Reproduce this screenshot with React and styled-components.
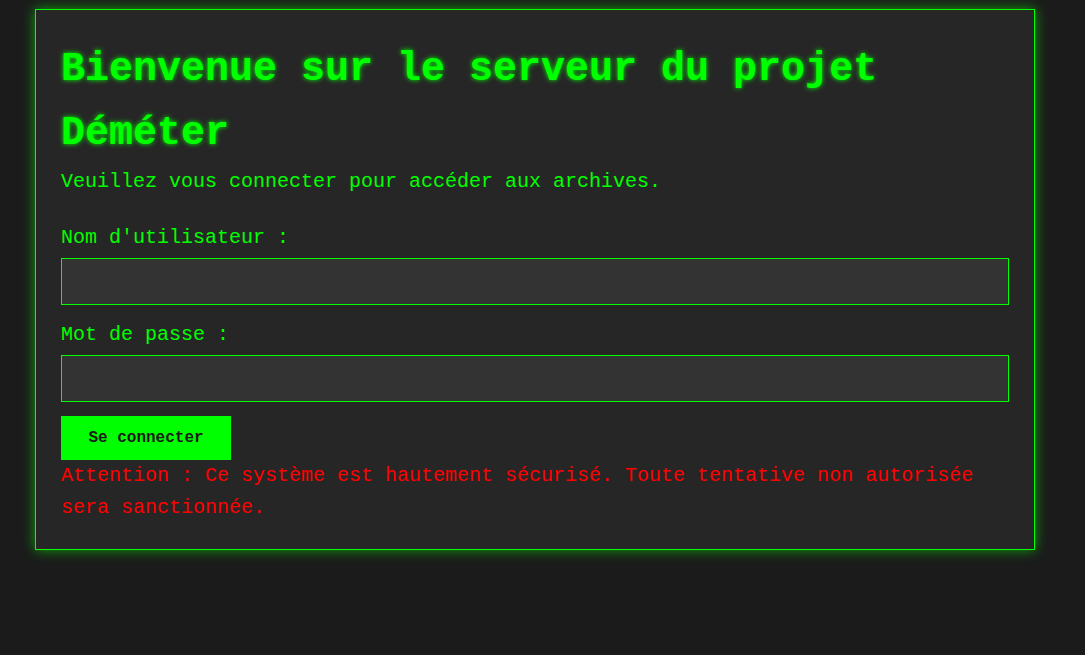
import React from "react"
import styled, { createGlobalStyle } from "styled-components"

const GlobalStyle = createGlobalStyle`
  html, body {
    margin: 0;
    padding: 0;
    background: #1b1b1b;
  }
  body {
    font-family: "Liberation Mono", "Courier New", monospace;
    color: #00ff00;
    line-height: 1.6;
    height: 655px;
  }
`

const App = () => {
  return (
    <Page>
      <GlobalStyle />
      <Terminal>
        <Title>Bienvenue sur le serveur du projet Déméter</Title>
        <Intro>Veuillez vous connecter pour accéder aux archives.</Intro>
        <form onSubmit={(e) => e.preventDefault()}>
          <Label htmlFor="username">Nom d'utilisateur :</Label>
          <Input id="username" type="text" />
          <Label htmlFor="password">Mot de passe :</Label>
          <Input id="password" type="password" />
          <Button type="submit">Se connecter</Button>
        </form>
        <Warning>
          Attention : Ce système est hautement sécurisé. Toute tentative non
          autorisée sera sanctionnée.
        </Warning>
      </Terminal>
    </Page>
  )
}

const Page = styled.div`
  padding: 9px 0 0 35px;
`
const Terminal = styled.div`
  box-sizing: border-box;
  width: 1000px;
  padding: 28px 25px 25px;
  background: #262626;
  border: 1px solid #00ff00;
  box-shadow: 0 0 12px rgba(0, 255, 0, 0.6);
`
const Title = styled.h1`
  margin: 0;
  font-size: 40px;
  font-weight: bold;
  line-height: 64px;
  text-shadow: 0 0 5px #00ff00;
`
const Intro = styled.p`
  margin: 0 0 24px;
  font-size: 20px;
  line-height: 32px;
`
const Label = styled.label`
  display: block;
  font-size: 20px;
  line-height: 32px;
  margin-bottom: 4px;
`
const Input = styled.input`
  display: block;
  box-sizing: border-box;
  appearance: none;
  width: 100%;
  height: 47px;
  margin: 0 0 14px;
  padding: 10px;
  background: #333333;
  border: 1px solid #00ff00;
  border-radius: 0;
  color: #00ff00;
  font-family: inherit;
  font-size: 20px;
  outline: none;
`
const Button = styled.button`
  display: block;
  width: 170px;
  height: 44px;
  margin-top: 13px;
  padding: 0;
  border: none;
  background: #00ff00;
  color: #1a1a1a;
  font-family: inherit;
  font-size: 16px;
  font-weight: bold;
  cursor: pointer;
`
const Warning = styled.p`
  margin: 0;
  color: #ff0000;
  font-size: 20px;
  line-height: 32px;
`

export default App
